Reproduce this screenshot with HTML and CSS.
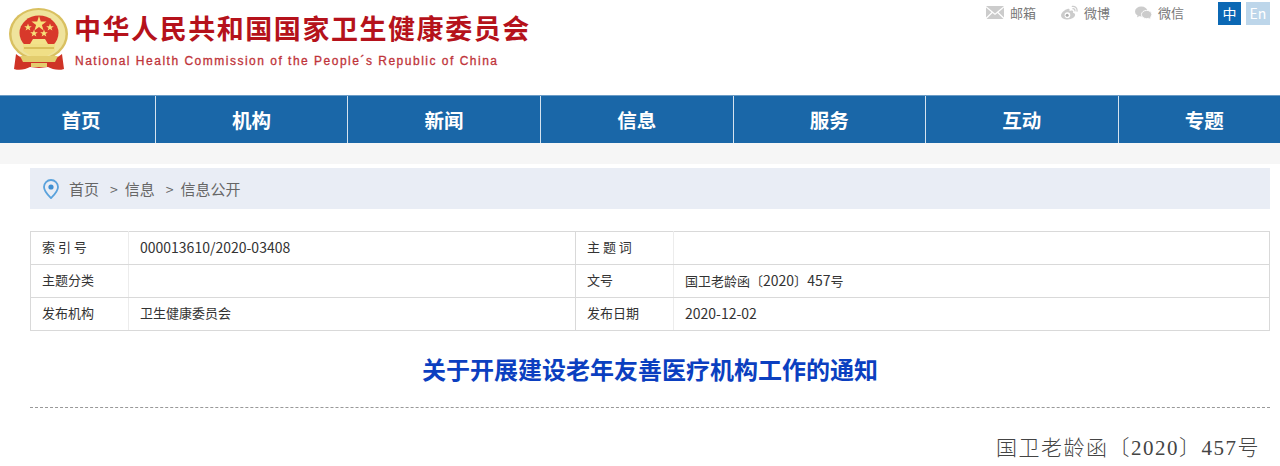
FILE: index.html
```html
<!DOCTYPE html>
<html lang="zh-CN">
<head>
    <meta charset="UTF-8">
    <title>关于开展建设老年友善医疗机构工作的通知</title>
    <link rel="stylesheet" href="styles.css">
</head>
<body>
    <!-- 页头 -->
    <div class="header">
        <div class="logo">
            <svg class="emblem" width="62" height="63" viewBox="0 0 62 63">
                <path d="M8 46c6 5 14 8 23 8s17-3 23-8l2 15c-6 2-12 0-16-2l-9 1-9-1c-4 2-10 4-16 2z" fill="#cf3326"/>
                <ellipse cx="30.500" cy="26" rx="29.500" ry="26" fill="#d9c060"/>
                <ellipse cx="30.500" cy="26" rx="27" ry="24" fill="#efe39c"/>
                <ellipse cx="31" cy="25" rx="19.500" ry="17.500" fill="#d8392a"/>
                <polygon points="31,8 32.800,13.500 38.500,13.500 33.900,16.900 35.600,22.400 31,19 26.400,22.400 28.100,16.900 23.500,13.500 29.200,13.500" fill="#f7e07a"/>
                <polygon points="20,15.500 21,18.200 23.800,18.200 21.500,19.900 22.400,22.600 20,21 17.600,22.600 18.500,19.900 16.200,18.200 19,18.200" fill="#f7e07a"/>
                <polygon points="42,15.500 43,18.200 45.800,18.200 43.500,19.900 44.400,22.600 42,21 39.600,22.600 40.500,19.900 38.200,18.200 41,18.200" fill="#f7e07a"/>
                <polygon points="26,21.500 27,24.200 29.800,24.200 27.500,25.900 28.400,28.600 26,27 23.600,28.600 24.500,25.900 22.200,24.200 25,24.200" fill="#f7e07a"/>
                <polygon points="36,21.500 37,24.200 39.800,24.200 37.500,25.900 38.400,28.600 36,27 33.600,28.600 34.500,25.900 32.200,24.200 35,24.200" fill="#f7e07a"/>
                <path d="M25 31h12l3 5H22z" fill="#f3e28a"/>
                <path d="M15 36h32v7l-8 5H23l-8-5z" fill="#f0df86"/>
                <path d="M16 40h30" stroke="#c9a93e" stroke-width="1.200"/>
                <path d="M12 48h38l-3 6H15z" fill="#e3cd6e"/>
                <path d="M23 55h16v4H23z" fill="#e3cd6e"/>
            </svg>
            <div class="logo-text">
                <div class="logo-cn">中华人民共和国国家卫生健康委员会</div>
                <div class="logo-en">National Health Commission of the People´s Republic of China</div>
            </div>
        </div>
        <div class="top-links">
            <a class="top-link">
                <svg width="18" height="13" viewBox="0 0 18 13"><path d="M0 0h18L9 7.500z" fill="#ccc"/><path d="M0 1.500l5.500 4.700L0 11.500zM18 1.500l-5.500 4.700 5.500 5.300zM6.500 7l2.500 2 2.500-2 6 6H.5z" fill="#ccc"/></svg>
                邮箱
            </a>
            <a class="top-link">
                <svg width="17" height="15" viewBox="0 0 18 16"><path d="M7.500 4C3.500 5 0 8.500 0 11.200 0 14 3.500 15.500 7 15.500c4.500 0 8-2.500 8-5 0-1.500-1.500-2-2.300-2.200.5-1.300.3-2.300-1-2.500-1-.1-2.200.4-2.700.6.300-1.300.2-3-1.500-2.400z" fill="#ccc"/><circle cx="6.800" cy="10.800" r="3" fill="#fff"/><circle cx="6.500" cy="11" r="1.600" fill="#aaa"/><path d="M12 1.500c3-.5 5.500 2 5 5M12.500 4c1.300-.2 2.500.9 2.300 2.300" fill="none" stroke="#ccc" stroke-width="1.300" stroke-linecap="round"/></svg>
                微博
            </a>
            <a class="top-link">
                <svg width="17" height="14" viewBox="0 0 19 15"><ellipse cx="7" cy="5.800" rx="7" ry="5.500" fill="#ccc"/><path d="M3 9.500l-.8 3 3.200-2z" fill="#ccc"/><ellipse cx="13" cy="9.200" rx="5.800" ry="4.600" fill="#ccc" stroke="#fff"/><path d="M15.500 12.500l1.500 2-.2-3z" fill="#ccc"/></svg>
                微信
            </a>
            <div class="lang">
                <span class="lang-item active">中</span>
                <span class="lang-item">En</span>
            </div>
        </div>
    </div>

    <!-- 导航 -->
    <div class="nav">
        <a class="nav-item">首页</a>
        <a class="nav-item">机构</a>
        <a class="nav-item">新闻</a>
        <a class="nav-item">信息</a>
        <a class="nav-item">服务</a>
        <a class="nav-item">互动</a>
        <a class="nav-item">专题</a>
    </div>
    <div class="band"></div>

    <div class="container">
        <!-- 面包屑 -->
        <div class="crumb">
            <svg width="16" height="20" viewBox="0 0 16 20"><path d="M8 1a7 7 0 0 0-7 7c0 4.500 4.500 8.500 7 11 2.500-2.500 7-6.500 7-11a7 7 0 0 0-7-7z" fill="none" stroke="#5aa2dc" stroke-width="1.800"/><circle cx="8" cy="8" r="2.600" fill="#3f8fd2"/></svg>
            <span class="crumb-first">首页</span>
            <span class="crumb-sep">&gt;</span>
            <span>信息</span>
            <span class="crumb-sep">&gt;</span>
            <span>信息公开</span>
        </div>

        <!-- 文件信息 -->
        <table class="info">
            <tr>
                <td class="label">索 引 号</td>
                <td class="value"><span class="num">000013610/2020-03408</span></td>
                <td class="label">主 题 词</td>
                <td class="value"></td>
            </tr>
            <tr>
                <td class="label">主题分类</td>
                <td class="value"></td>
                <td class="label">文号</td>
                <td class="value">国卫老龄函〔<span class="num">2020</span>〕<span class="num">457</span>号</td>
            </tr>
            <tr>
                <td class="label">发布机构</td>
                <td class="value">卫生健康委员会</td>
                <td class="label">发布日期</td>
                <td class="value"><span class="num">2020-12-02</span></td>
            </tr>
        </table>

        <h1 class="title">关于开展建设老年友善医疗机构工作的通知</h1>
        <div class="doc-no">国卫老龄函〔2020〕457号</div>
    </div>
</body>
</html>
```
FILE: styles.css
```css
* {
    box-sizing: border-box;
}
html, body {
    height: 466px;
    overflow: hidden;
}
body {
    margin: 0;
    font-family: "Noto Sans CJK SC", "Liberation Sans", sans-serif;
    background-color: #fff;
    color: #333;
}
.header {
    height: 95px;
    display: flex;
    justify-content: space-between;
    align-items: flex-start;
    padding: 0 10px 0 8px;
}
.logo {
    display: flex;
    align-items: flex-start;
    padding-top: 8px;
}
.emblem {
    flex: none;
}
.logo-text {
    margin-left: 4px;
}
.logo-cn {
    font-size: 27px;
    line-height: 40px;
    font-weight: 700;
    letter-spacing: 1.550px;
    color: #b5121b;
    white-space: nowrap;
}
.logo-en {
    font-family: "Liberation Sans", sans-serif;
    font-size: 12px;
    line-height: 16px;
    margin: 5px 0 0 1px;
    letter-spacing: 1.500px;
    -webkit-text-stroke: 0.3px #c0343a;
    color: #c0343a;
    white-space: nowrap;
}
.top-links {
    display: flex;
    align-items: center;
    height: 24px;
    margin-top: 1px;
}
.top-link {
    display: flex;
    align-items: center;
    gap: 6px;
    margin-right: 25px;
    padding-bottom: 1px;
    font-size: 13px;
    color: #777;
}
.lang {
    display: flex;
    gap: 5px;
    margin-left: 9px;
}
.lang-item {
    width: 24px;
    height: 23px;
    line-height: 23px;
    text-align: center;
    font-size: 14px;
    color: #fff;
    background-color: #bdd6ea;
}
.lang-item.active {
    width: 23px;
    background-color: #0b68b4;
}
.nav {
    display: flex;
    height: 48px;
    background-color: #1a67a8;
    border-top: 1px solid #6b9cc6;
}
.nav-item {
    width: 192.500px;
    line-height: 47px;
    text-align: center;
    font-size: 19.500px;
    font-weight: 700;
    color: #fff;
    border-right: 1px solid #d5e3ef;
}
.nav-item:first-child {
    width: 156px;
    padding-left: 7px;
}
.nav-item:nth-child(2) {
    width: 192px;
}
.nav-item:nth-child(3) {
    width: 193px;
}
.nav-item:last-child {
    flex: 1;
    border-right: none;
    padding-left: 10px;
}
.band {
    height: 21px;
    background-color: #f6f6f6;
}
.container {
    margin: 0 10px 0 30px;
}
.crumb {
    height: 41px;
    margin-top: 4px;
    padding-left: 13px;
    display: flex;
    align-items: center;
    font-size: 15px;
    color: #666;
    background-color: #e9edf5;
}
.crumb-first {
    margin-left: 10px;
}
.crumb-sep {
    margin: 0 7px 0 11px;
    font-size: 14px;
}
.info {
    width: 100%;
    margin-top: 22px;
    table-layout: fixed;
    border-collapse: collapse;
    font-size: 13px;
}
.info td {
    height: 33px;
    border: 1px solid #d9d9d9;
    padding: 0 11px 3px;
    color: #333;
}
.info .label {
    width: 98px;
    border-right-color: #ececec;
}
.info .value {
    width: 447px;
}
.info tr .value:last-child {
    width: auto;
}
.num {
    font-size: 14px;
}
.title {
    margin: 0;
    height: 77px;
    line-height: 76px;
    text-align: center;
    font-size: 24px;
    font-weight: 700;
    color: #0b3fc0;
    border-bottom: 1px dashed #999;
}
.doc-no {
    margin-top: 25px;
    padding-right: 10px;
    text-align: right;
    font-family: "Liberation Serif", "Noto Sans CJK SC", serif;
    font-size: 21px;
    line-height: 30px;
    letter-spacing: 1.500px;
    font-weight: 300;
    color: #444;
}
```
